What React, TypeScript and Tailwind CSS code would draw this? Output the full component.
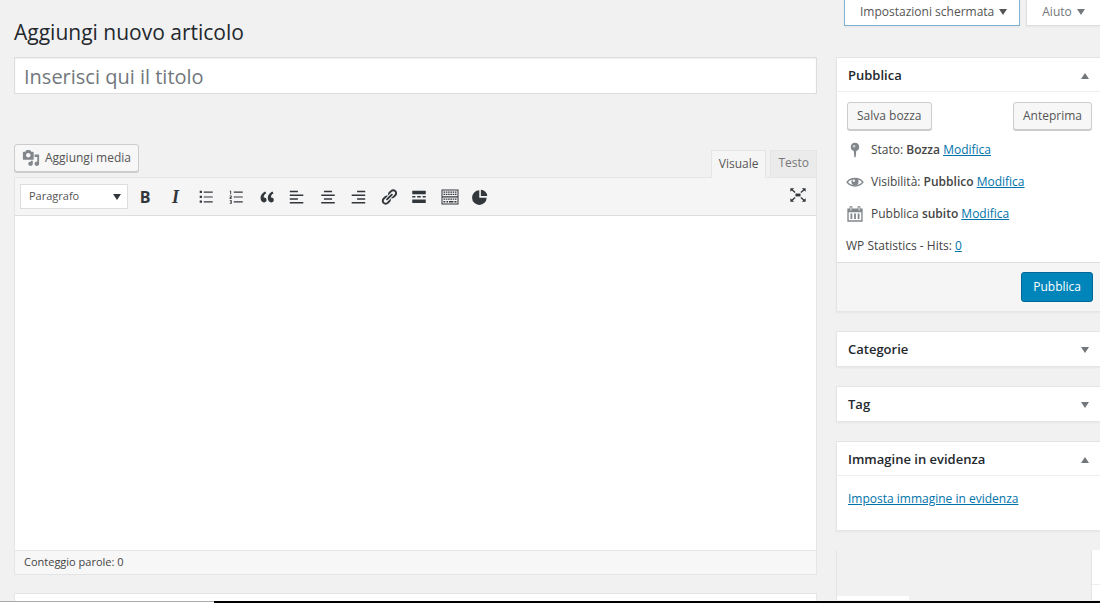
import React from "react";

interface IconProps {
  className?: string;
  children: React.ReactNode;
}

const Icon: React.FC<IconProps> = ({ className = "size-[18px]", children }) => (
  <svg viewBox="0 0 20 20" fill="currentColor" className={className} aria-hidden="true">
    {children}
  </svg>
);

const Caret: React.FC<{ up?: boolean; className?: string }> = ({ up, className = "w-2 h-[6px]" }) => (
  <svg viewBox="0 0 8 6" fill="currentColor" className={className} aria-hidden="true">
    {up ? <path d="M4 0l4 6H0z" /> : <path d="M0 0h8L4 6z" />}
  </svg>
);

const MediaIcon = () => (
  <Icon className="size-[18px] text-[#82878c]">
    <path d="M13 11V4c0-.55-.45-1-1-1h-1.67L9 1H5L3.67 3H2c-.55 0-1 .45-1 1v7c0 .55.45 1 1 1h10c.55 0 1-.45 1-1zM7 4.5c1.38 0 2.5 1.12 2.5 2.5S8.38 9.5 7 9.5 4.5 8.38 4.5 7 5.62 4.5 7 4.5zM14 6h5v10.5c0 1.38-1.12 2.5-2.5 2.5S14 17.88 14 16.5s1.12-2.5 2.5-2.5c.17 0 .34.02.5.05V9h-3V6zm-4 8.05V13h2v3.5c0 1.38-1.12 2.5-2.5 2.5S7 17.88 7 16.5 8.12 14 9.5 14c.17 0 .34.02.5.05z" />
  </Icon>
);

const tools = [
  { label: "Grassetto", icon: <span className="text-base font-bold">B</span> },
  { label: "Corsivo", icon: <span className="font-['Liberation_Serif',serif] text-lg font-bold italic">I</span> },
  {
    label: "Elenco puntato",
    icon: (
      <Icon>
        <path d="M3 3h2.5v2.5H3zM3 8.5h2.5V11H3zM3 14h2.5v2.5H3zM7.5 4h10v1.2h-10zM7.5 9.4h10v1.2h-10zM7.5 14.8h10V16h-10z" />
      </Icon>
    ),
  },
  {
    label: "Elenco numerato",
    icon: (
      <Icon>
        <path d="M3 3h1.6v4H3.6V4H3zM3 8.3h2.2v2.4H4v.6h1.2v1H3V9.9h1.2v-.6H3zM3 13.5h2.3v4H3v-.9h1.3v-.7H3.3V15h1v-.6H3zM7.5 4h10v1.2h-10zM7.5 9.4h10v1.2h-10zM7.5 14.8h10V16h-10z" />
      </Icon>
    ),
  },
  {
    label: "Citazione",
    icon: (
      <Icon>
        <path d="M9.49 13.22c0-.74-.2-1.38-.61-1.9-.62-.78-1.83-.88-2.53-.72-.29-1.65 1.11-3.75 2.92-4.65L7.88 4c-2.73 1.3-5.42 4.28-4.96 8.05C3.21 14.43 4.59 16 6.54 16c.85 0 1.56-.25 2.12-.75s.83-1.18.83-2.03zm8.05 0c0-.74-.2-1.38-.61-1.9-.63-.78-1.83-.88-2.53-.72-.29-1.65 1.11-3.75 2.92-4.65L15.93 4c-2.73 1.3-5.41 4.28-4.95 8.05.29 2.38 1.66 3.95 3.61 3.95.85 0 1.56-.25 2.12-.75s.83-1.18.83-2.03z" />
      </Icon>
    ),
  },
  {
    label: "Allinea a sinistra",
    icon: (
      <Icon>
        <path d="M2 3h9v1.7H2zM2 7.2h15v1.7H2zM2 11.4h9v1.7H2zM2 15.6h15v1.7H2z" />
      </Icon>
    ),
  },
  {
    label: "Allinea al centro",
    icon: (
      <Icon>
        <path d="M5.5 3h9v1.7h-9zM2.5 7.2h15v1.7h-15zM5.5 11.4h9v1.7h-9zM2.5 15.6h15v1.7h-15z" />
      </Icon>
    ),
  },
  {
    label: "Allinea a destra",
    icon: (
      <Icon>
        <path d="M9 3h9v1.7H9zM3 7.2h15v1.7H3zM9 11.4h9v1.7H9zM3 15.6h15v1.7H3z" />
      </Icon>
    ),
  },
  {
    label: "Inserisci link",
    icon: (
      <Icon>
        <path d="M17.74 2.76c1.68 1.69 1.68 4.41 0 6.1l-1.53 1.52c-1.12 1.12-2.7 1.47-4.14 1.09l2.62-2.61.76-.77.76-.76c.84-.84.84-2.2 0-3.04-.84-.85-2.2-.85-3.04 0l-.77.76-3.38 3.38c-.37-1.44-.02-3.02 1.1-4.14l1.52-1.53c1.69-1.68 4.42-1.68 6.1 0zM8.59 13.43l5.34-5.34c.42-.42.42-1.1 0-1.52-.44-.43-1.13-.39-1.53 0l-5.33 5.34c-.42.42-.42 1.1 0 1.52.44.43 1.13.39 1.52 0zm-.76 2.29l4.14-4.15c.38 1.44.03 3.02-1.09 4.14l-1.52 1.53c-1.69 1.68-4.41 1.68-6.1 0-1.68-1.68-1.68-4.42 0-6.1l1.53-1.52c1.12-1.12 2.7-1.47 4.14-1.1l-4.14 4.15c-.85.84-.85 2.2 0 3.05.84.84 2.2.84 3.04 0z" />
      </Icon>
    ),
  },
  {
    label: "Leggi tutto",
    icon: (
      <Icon>
        <path d="M2.5 3h15v4h-15zM2.5 9h3.5v1.5H2.5zM8 9h4v1.5H8zM14 9h3.5v1.5H14zM2.5 12.8h15v4h-15z" />
      </Icon>
    ),
  },
  {
    label: "Barra strumenti",
    icon: (
      <Icon className="size-5">
        <path
          fillRule="evenodd"
          d="M1.5 2.5h17v15h-17zM2.5 3.5v5.7h15V3.5zM2.5 10.4v6.1h15v-6.1z"
        />
        <path
          d="M3.5 5.2h13M3.5 7.4h13M3.5 12.2h13"
          stroke="currentColor"
          strokeWidth="1.3"
          strokeDasharray="1.6 .7"
        />
        <path d="M3.5 14h1.8v1.4H3.5zM6.5 14h1.6v1.4H6.5zM9 14h4.4v1.4H9zM14.4 14h2.1v1.4h-2.1z" />
      </Icon>
    ),
  },
  {
    label: "Statistiche",
    icon: (
      <Icon>
        <path d="M9.2 2.6v8.2h8.2a8.1 8.1 0 1 1-8.2-8.2z" />
        <path d="M11 1.9a7.3 7.3 0 0 1 7.1 7.1H11z" />
      </Icon>
    ),
  },
];

const FullscreenIcon = () => (
  <Icon>
    <path d="M7.2 8.4h5.6v3.2H7.2z" />
    <path d="M1.5 2.5h4.3L1.500 6.400zM18.500 2.500h-4.300l4.300 3.900zM1.500 17.500h4.300l-4.300-3.900zM18.500 17.500h-4.300l4.300-3.900z" />
    <path d="M3 3.800l3.800 3.400M17 3.800l-3.800 3.400M3 16.200l3.800-3.400M17 16.200l-3.800-3.400" stroke="currentColor" strokeWidth="1.500" />
  </Icon>
);

const PinIcon = () => (
  <Icon>
    <path d="M10 2a4.6 4.6 0 0 1 1.4 9l-.6 6.6c-.2.9-1.4.9-1.6 0L8.6 11A4.6 4.6 0 0 1 10 2z" />
    <circle cx="9" cy="5.8" r="1.4" fill="#fff" fillOpacity=".6" />
  </Icon>
);

const EyeIcon = () => (
  <Icon>
    <path d="M1.3 10.2C5 4.8 15 4.8 18.7 10.2 15 15.8 5 15.8 1.3 10.2z" fill="none" stroke="currentColor" strokeWidth="1.7" />
    <circle cx="10" cy="9.8" r="4" />
    <circle cx="8.7" cy="8.5" r="1.3" fill="#fff" />
  </Icon>
);

const CalendarIcon = () => (
  <Icon>
    <path
      fillRule="evenodd"
      d="M1.5 4H4V1.5h3V4h6V1.5h3V4h2.5v14.5h-17zM3 8v9h14V8zM5 2.5V6h1V2.5zM14 2.5V6h1V2.5z"
    />
    <path d="M5 9.5h2v6H5zM9 9.5h2v6H9zM13 9.5h2v6h-2z" />
  </Icon>
);

interface PanelProps {
  title: string;
  open?: boolean;
  children?: React.ReactNode;
}

const Panel: React.FC<PanelProps> = ({ title, open, children }) => (
  <section className="border-y border-l border-[#e5e5e5] bg-white shadow-xs">
    <button
      type="button"
      aria-expanded={!!open}
      className={`flex h-[34px] w-full items-center justify-between px-[11px] pt-0.5 ${open ? "border-b border-[#eee]" : ""}`}
    >
      <span className="text-[13px] font-semibold text-[#23282d]">{title}</span>
      <span className="text-[#72777c]">
        <Caret up={open} />
      </span>
    </button>
    {children}
  </section>
);

const linkClass = "text-[#0073aa] underline";
const buttonClass =
  "flex h-7 items-center rounded-[3px] border border-[#ccc] bg-[#f7f7f7] text-[#555] shadow-[0_1px_0_#ccc]";

const statusRows = [
  { icon: <PinIcon />, label: "Stato:", value: "Bozza" },
  { icon: <EyeIcon />, label: "Visibilità:", value: "Pubblico" },
  { icon: <CalendarIcon />, label: "Pubblica", value: "subito" },
];

const Editor = () => (
  <div className="mt-[50px]">
    <div className="flex items-end justify-between">
      <button type="button" className={`${buttonClass} mb-[5px] gap-[5px] px-[7px]`}>
        <MediaIcon />
        Aggiungi media
      </button>
      <div className="flex gap-1 text-[#555]">
        <button
          type="button"
          className="relative -mb-px h-7 border border-b-0 border-[#e5e5e5] bg-[#f5f5f5] px-[7px] pb-0.5"
        >
          Visuale
        </button>
        <button
          type="button"
          className="h-[27px] border border-b-0 border-[#e5e5e5] bg-[#ebebeb] px-[7px] pb-0.5 text-[#777]"
        >
          Testo
        </button>
      </div>
    </div>

    <div className="border border-[#e5e5e5]">
      <div className="flex h-[38px] items-center border-b border-[#ddd] bg-[#f5f5f5] px-[5px] text-[#32373c]">
        <div className="relative">
          <select
            aria-label="Formato"
            className="h-[25px] w-[108px] appearance-none border border-[#ddd] bg-white px-2 text-[11px] text-[#555]"
          >
            <option>Paragrafo</option>
          </select>
          <Caret className="pointer-events-none absolute top-[10px] right-[7px] h-[6px] w-2" />
        </div>
        <div className="ml-[3px] flex w-[363px] justify-between">
          {tools.map((tool) => (
            <button
              key={tool.label}
              type="button"
              aria-label={tool.label}
              className="flex size-7 items-center justify-center"
            >
              {tool.icon}
            </button>
          ))}
        </div>
        <button type="button" aria-label="Schermo intero" className="mr-1 mb-1 ml-auto">
          <FullscreenIcon />
        </button>
      </div>
      <textarea aria-label="Contenuto" className="block h-[334px] w-full resize-none bg-white p-2.5 outline-none" />
      <div className="flex h-6 items-center border-t border-[#e5e5e5] bg-[#f7f7f7] px-[9px] text-[11px] text-[#444]">
        Conteggio parole: 0
      </div>
    </div>
  </div>
);

export default function App() {
  return (
    <div className="flex h-screen flex-col bg-white font-['Open_Sans',sans-serif] text-xs text-[#444]">
      <div className="flex min-h-0 flex-1 gap-[19px] overflow-hidden bg-[#f1f1f1] pl-3.5">
        <main className="min-w-0 flex-1">
          <h1 className="pt-[18px] text-[21px] leading-7 text-[#23282d]">Aggiungi nuovo articolo</h1>
          <input
            type="text"
            aria-label="Titolo"
            placeholder="Inserisci qui il titolo"
            className="mt-[11px] block h-[37px] w-full border border-[#ddd] bg-white px-[9px] pt-0.5 text-xl text-[#32373c] shadow-[inset_0_1px_2px_rgba(0,0,0,0.07)] outline-none placeholder:text-[#72777c]"
          />
          <Editor />
          <section className="mt-[18px] h-10 border border-[#e5e5e5] bg-white" />
        </main>

        <aside className="w-[264px] shrink-0">
          <div className="mb-[31px] ml-2 flex gap-1.5 text-[#555]">
            <button
              type="button"
              className="flex h-[26px] shrink-0 items-center gap-[5px] border border-t-0 border-[#7fb3d3] bg-white pr-3 pb-0.5 pl-[15px] shadow-xs"
            >
              Impostazioni schermata
              <Caret />
            </button>
            <button
              type="button"
              className="flex h-[26px] flex-1 items-center gap-[5px] border border-t-0 border-r-0 border-[#ddd] bg-white pb-0.5 pl-[15px] text-[#72777c] shadow-xs"
            >
              Aiuto
              <Caret />
            </button>
          </div>

          <div className="flex flex-col gap-[19px]">
            <Panel title="Pubblica" open>
              <div className="flex justify-between px-2 pt-2.5 pl-2.5">
                <button type="button" className={`${buttonClass} px-[9px]`}>
                  Salva bozza
                </button>
                <button type="button" className={`${buttonClass} px-[9px]`}>
                  Anteprima
                </button>
              </div>
              <ul className="mt-1 pl-[9px]">
                {statusRows.map((row) => (
                  <li key={row.label} className="flex h-8 items-center gap-[7px]">
                    <span className="text-[#82878c]">{row.icon}</span>
                    <span>
                      {row.label} <b className="font-semibold">{row.value}</b>{" "}
                      <a href="#modifica" className={linkClass}>
                        Modifica
                      </a>
                    </span>
                  </li>
                ))}
                <li className="flex h-8 items-center gap-[3px]">
                  WP Statistics - Hits:
                  <a href="#hits" className={linkClass}>
                    0
                  </a>
                </li>
              </ul>
              <div className="flex justify-end border-t border-[#ddd] bg-[#f5f5f5] py-[9px] pr-[7px]">
                <button
                  type="button"
                  className="h-[30px] rounded-[3px] border border-[#006799] bg-[#0085ba] px-[11px] font-medium text-white"
                >
                  Pubblica
                </button>
              </div>
            </Panel>
            <Panel title="Categorie" />
            <Panel title="Tag" />
            <Panel title="Immagine in evidenza" open>
              <div className="px-[11px] pt-[15px] pb-[23px]">
                <a href="#immagine" className={linkClass}>
                  Imposta immagine in evidenza
                </a>
              </div>
            </Panel>
            <div className="flex h-[50px] border-l border-[#e5e5e5]">
              <div className="flex flex-1 flex-col justify-end">
                <div className="h-1 w-[72px] bg-white" />
              </div>
              <div className="w-[9px] border-l border-[#e5e5e5] bg-white pt-[34px]">
                <div className="border-t border-[#eee]" />
              </div>
            </div>
          </div>
        </aside>
      </div>

      <footer className="flex h-[13px] shrink-0">
        <div className="h-px w-[214px] bg-[#aaa]" />
        <div className="h-0.5 flex-1 bg-black" />
      </footer>
    </div>
  );
}
